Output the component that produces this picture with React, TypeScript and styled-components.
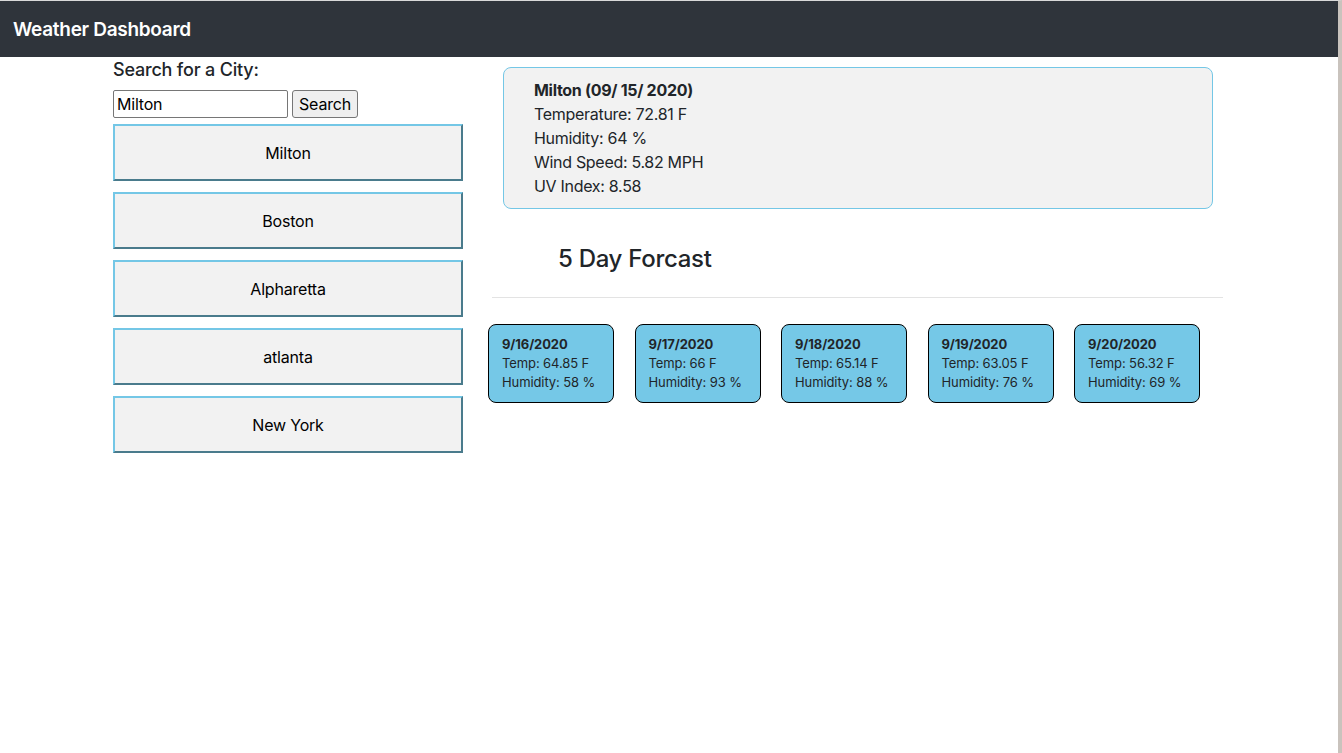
import styled, { createGlobalStyle } from 'styled-components';

const GlobalStyle = createGlobalStyle`
  body {
    margin: 0;
    background: #fff;
    color: #212529;
    font-family: Inter, "Noto Sans", Roboto, sans-serif;
  }
`;

const cities = ['Milton', 'Boston', 'Alpharetta', 'atlanta', 'New York'];

const forecast = [
  { date: '9/16/2020', temp: '64.85', humidity: 58 },
  { date: '9/17/2020', temp: '66', humidity: 93 },
  { date: '9/18/2020', temp: '65.14', humidity: 88 },
  { date: '9/19/2020', temp: '63.05', humidity: 76 },
  { date: '9/20/2020', temp: '56.32', humidity: 69 },
];

const Page = styled.div`
  min-height: 753px;
  border-top: 1px solid #d9d9d9;
  border-right: 4px solid #c9c3bd;
  box-sizing: border-box;
`;

const NavBar = styled.header`
  height: 56px;
  background: #2f343b;
  display: flex;
  align-items: center;
  padding-left: 13px;
`;

const Brand = styled.span`
  color: #fff;
  font-size: 19px;
  font-weight: 600;
  letter-spacing: -0.3px;
`;

const Main = styled.main`
  display: flex;
  padding-left: 113px;
  gap: 25px;
`;

const SideBar = styled.aside`
  width: 350px;
  display: flex;
  flex-direction: column;
`;

const SearchLabel = styled.h2`
  margin: 2px 0 0;
  font-size: 18px;
  font-weight: 500;
  line-height: 22px;
  letter-spacing: -0.2px;
`;

const SearchRow = styled.form`
  display: flex;
  gap: 4px;
  margin-top: 9px;
`;

const CityInput = styled.input`
  width: 175px;
  height: 28px;
  box-sizing: border-box;
  border: 1px solid #767676;
  border-radius: 2px;
  padding: 0 3px;
  font: 16px Inter, "Noto Sans", sans-serif;
  letter-spacing: -0.2px;
  color: #000;
`;

const SearchButton = styled.button`
  height: 28px;
  width: 66px;
  box-sizing: border-box;
  border: 1px solid #767676;
  border-radius: 3px;
  background: #efefef;
  font: 16px Inter, "Noto Sans", sans-serif;
  letter-spacing: -0.2px;
  color: #000;
  padding: 0;
`;

const CityList = styled.div`
  display: flex;
  flex-direction: column;
  gap: 11px;
  margin-top: 6px;
`;

const CityButton = styled.button`
  height: 57px;
  width: 350px;
  box-sizing: border-box;
  background: #f2f2f2;
  border: 2px solid;
  border-color: #74c7e6 #4a7b8c #4a7b8c #74c7e6;
  font: 16px Inter, "Noto Sans", sans-serif;
  letter-spacing: -0.2px;
  color: #000;
`;

const Content = styled.section`
  width: 735px;
  display: flex;
  flex-direction: column;
`;

const CurrentCard = styled.div`
  margin: 10px 10px 0 15px;
  padding: 10px 30px;
  background: #f2f2f2;
  border: 1px solid #74c7e6;
  border-radius: 8px;
  font-size: 16px;
  line-height: 24px;
  letter-spacing: -0.3px;
`;

const Line = styled.div<{ $bold?: boolean }>`
  font-weight: ${(p) => (p.$bold ? 700 : 400)};
`;

const ForecastTitle = styled.h2`
  margin: 35px 0 0 70px;
  font-size: 24px;
  font-weight: 500;
  line-height: 29px;
  letter-spacing: -0.3px;
`;

const Divider = styled.hr`
  margin: 24px 0 0 4px;
  border: 0;
  border-top: 1px solid #e3e3e3;
`;

const ForecastRow = styled.div`
  display: flex;
  gap: 20.5px;
  margin-top: 26px;
`;

const DayCard = styled.div`
  width: 126px;
  height: 79px;
  box-sizing: border-box;
  padding: 10px 13px;
  background: #75c8e7;
  border: 1px solid #000;
  border-radius: 8px;
  font-size: 13px;
  line-height: 19px;
  letter-spacing: -0.1px;
`;

export default function App() {
  return (
    <Page>
      <GlobalStyle />
      <NavBar>
        <Brand>Weather Dashboard</Brand>
      </NavBar>
      <Main>
        <SideBar>
          <SearchLabel>Search for a City:</SearchLabel>
          <SearchRow onSubmit={(e) => e.preventDefault()}>
            <CityInput defaultValue="Milton" />
            <SearchButton type="submit">Search</SearchButton>
          </SearchRow>
          <CityList>
            {cities.map((c) => (
              <CityButton key={c}>{c}</CityButton>
            ))}
          </CityList>
        </SideBar>
        <Content>
          <CurrentCard>
            <Line $bold>Milton (09/ 15/ 2020)</Line>
            <Line>Temperature: 72.81 F</Line>
            <Line>Humidity: 64 %</Line>
            <Line>Wind Speed: 5.82 MPH</Line>
            <Line>UV Index: 8.58</Line>
          </CurrentCard>
          <ForecastTitle>5 Day Forcast</ForecastTitle>
          <Divider />
          <ForecastRow>
            {forecast.map((d) => (
              <DayCard key={d.date}>
                <Line $bold>{d.date}</Line>
                <Line>Temp: {d.temp} F</Line>
                <Line>Humidity: {d.humidity} %</Line>
              </DayCard>
            ))}
          </ForecastRow>
        </Content>
      </Main>
    </Page>
  );
}
